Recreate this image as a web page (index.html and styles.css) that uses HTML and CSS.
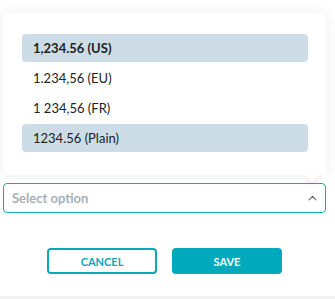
FILE: index.html
```html
<!DOCTYPE html>
<html lang="en">
<head>
  <meta charset="UTF-8">
  <meta name="viewport" content="width=device-width, initial-scale=1.0">
  <title>Number format</title>
  <link rel="stylesheet" href="styles.css">
</head>
<body>
  <div class="screen">
    <div class="field">
      <!-- Lista opcji -->
      <div class="popover">
        <ul class="options">
          <li class="option selected">1,234.56 (US)</li>
          <li class="option">1.234,56 (EU)</li>
          <li class="option">1 234,56 (FR)</li>
          <li class="option hover">1234.56 (Plain)</li>
        </ul>
      </div>

      <div class="select">
        <span class="placeholder">Select option</span>
        <svg class="chevron" width="9" height="6" viewBox="0 0 9 6">
          <path d="M1 4.8 L4.5 1.3 L8 4.8" fill="none" stroke="#5d6570" stroke-width="1.1" stroke-linecap="round" stroke-linejoin="round"/>
        </svg>
      </div>

      <div class="actions">
        <button class="btn btn-outline">Cancel</button>
        <button class="btn btn-fill">Save</button>
      </div>
    </div>
  </div>
  <div class="bottom-strip"></div>
</body>
</html>
```

FILE: styles.css
```css
* {
  box-sizing: border-box;
  margin: 0;
  padding: 0;
}

body {
  font-family: Lato, 'Open Sans', sans-serif;
  background-color: #fff;
  color: #222;
  width: 335px;
  height: 299px;
  overflow: hidden;
}

.screen {
  height: 296px;
  padding: 13px 9px 0 3px;
}

.field {
  width: 323px;
}

.popover {
  position: relative;
  background: #fff;
  border-radius: 4px;
  box-shadow: 0 0 14px rgba(40, 50, 70, 0.09);
  padding: 21px 18px 23px 19px;
}

/* strzałka pod listą */
.popover::after {
  content: '';
  position: absolute;
  right: 9px;
  bottom: -5px;
  width: 10px;
  height: 10px;
  background: #fff;
  transform: rotate(45deg);
  box-shadow: 3px 3px 5px rgba(40, 50, 70, 0.06);
}

.options {
  list-style: none;
  display: flex;
  flex-direction: column;
  gap: 2px;
}

.option {
  height: 28px;
  line-height: 28px;
  padding-left: 11px;
  font-size: 13px;
  border-radius: 4px;
  color: #222;
}

.option.selected {
  background: #ccdde8;
  font-weight: bold;
}

.option.hover {
  background: #ccdde8;
}

.select {
  margin-top: 8px;
  height: 30px;
  border: 1px solid #19a9b7;
  border-radius: 4px;
  display: flex;
  align-items: center;
  justify-content: space-between;
  padding: 0 8px;
}

.placeholder {
  font-size: 13px;
  font-weight: bold;
  color: #a9b0b8;
}

.actions {
  display: flex;
  justify-content: center;
  gap: 15px;
  margin-top: 35px;
}

.btn {
  width: 110px;
  height: 26px;
  border-radius: 4px;
  font-family: Lato, sans-serif;
  font-size: 11px;
  font-weight: bold;
  text-transform: uppercase;
  cursor: pointer;
}

.btn-outline {
  background: #fff;
  border: 2px solid #0aa9ba;
  color: #0aa9ba;
}

.btn-fill {
  background: #00a9bb;
  border: none;
  color: #fff;
}

.bottom-strip {
  height: 3px;
  background: #f3f3f3;
}
```
